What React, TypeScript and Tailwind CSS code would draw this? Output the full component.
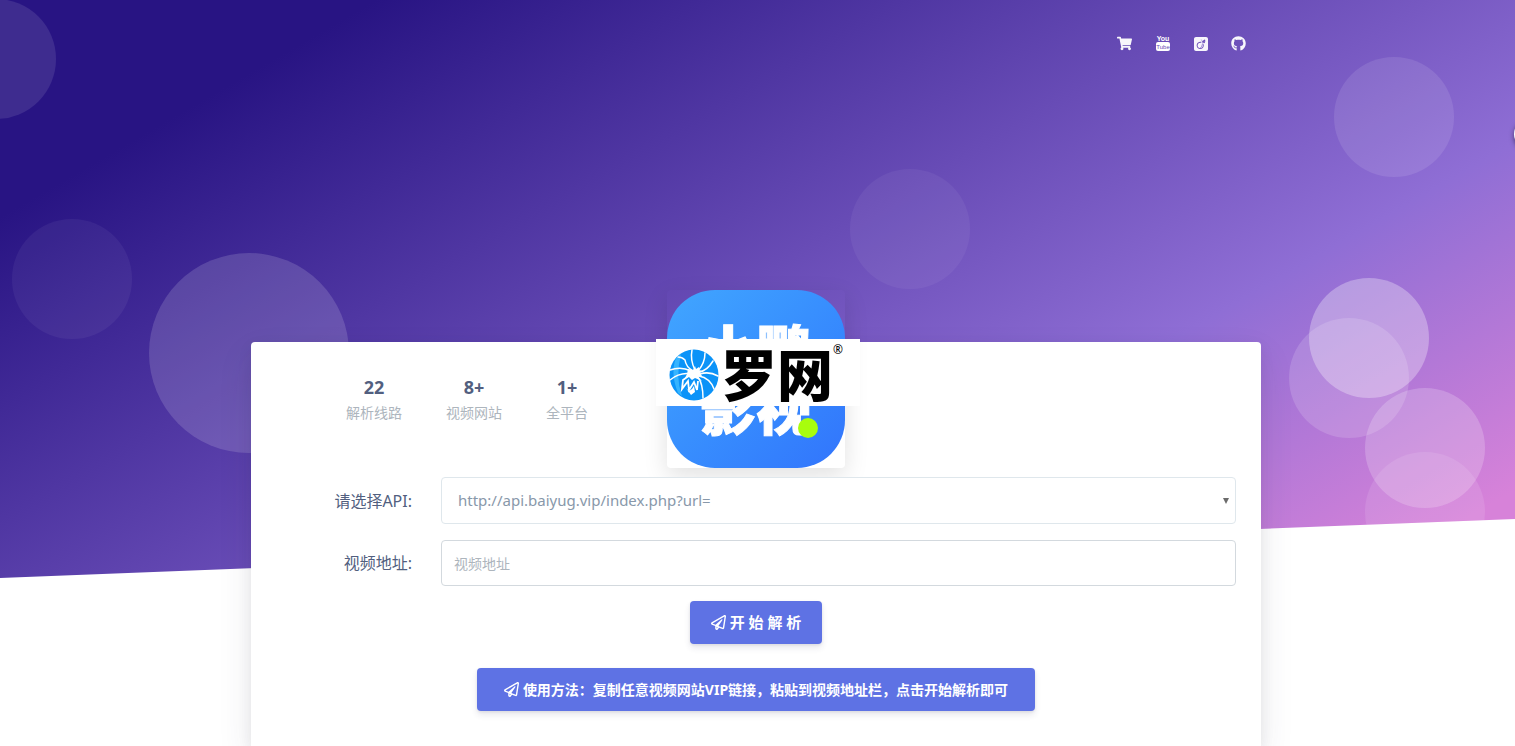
import React from "react";
import { FaGithub, FaRegPaperPlane, FaShoppingCart } from "react-icons/fa";
import { FaSquareViadeo } from "react-icons/fa6";

const stats = [
  { value: "22", label: "解析线路" },
  { value: "8+", label: "视频网站" },
  { value: "1+", label: "全平台" },
];

const bubbles = [
  "-left-16 top-0 size-[120px] bg-white/10",
  "right-[4%] top-[10%] size-[120px] bg-white/10",
  "right-[5.67%] top-[279px] size-[120px] bg-white/30",
  "right-[7%] top-[319px] size-[120px] bg-white/15",
  "left-3 top-[38%] size-[120px] bg-white/5",
  "left-[149px] top-[254px] size-[200px] bg-white/15",
  "right-[36%] bottom-[50%] size-[120px] bg-white/5",
  "right-[2%] bottom-[70px] size-[120px] bg-white/20",
  "right-[2%] bottom-[1%] size-[120px] bg-white/10",
];

function YoutubeIcon() {
  return (
    <svg viewBox="0 0 14 17" className="h-[17px] w-[14px] overflow-visible" aria-hidden="true">
      <text x="7" y="6" textAnchor="middle" fontSize="7" fontWeight="bold" fontFamily="Liberation Sans Narrow, Liberation Sans, sans-serif" fill="#fff">
        You
      </text>
      <rect x="0" y="7" width="14" height="9" rx="2" fill="#fff" />
      <text x="7" y="14" textAnchor="middle" fontSize="6" fontFamily="Liberation Sans Narrow, Liberation Sans, sans-serif" fill="#6a4bb5">
        Tube
      </text>
    </svg>
  );
}

function Cover() {
  return (
    <div className="absolute inset-x-0 -top-px h-[579px] overflow-hidden bg-[linear-gradient(150deg,#281483_15%,#8f6ed5_70%,#d782d9_94%)] [clip-path:polygon(0_0,100%_0,100%_calc(100%_-_3.9vw),0_100%)]">
      {bubbles.map((b) => (
        <span key={b} className={"absolute rounded-full " + b} />
      ))}
    </div>
  );
}

function Emblem() {
  return (
    <svg viewBox="0 0 50 52" className="h-[52px] w-[50px]" aria-hidden="true">
      <ellipse cx="25" cy="26" rx="24.5" ry="25.5" fill="#0b93f8" />
      <path d="M7 9 Q1 24 9 44 L13 47 Q6 28 12 5Z" fill="#35b4ff" />
      <g fill="none" stroke="#fff" strokeWidth="1.5" strokeLinecap="round">
        <path d="M24 22Q17 18 16 11Q13 8 9 8" />
        <path d="M26 21Q21 11 23 1" />
        <path d="M29 22Q36 14 36 4" />
        <path d="M30 23Q38 22 44 12" />
        <path d="M31 25Q40 22 49 27" />
        <path d="M30 27Q41 29 45 40" />
        <path d="M29 28Q34 35 34 49" />
        <path d="M22 22Q12 17 1 21" />
        <path d="M22 25Q11 23 1 31" />
      </g>
      <path d="M19 20l5 1 2-4 1 3 3-2v3l3 1-2 2 2 3-4 1 4 4-7-3-3 2-3-3-4 1 2-4z" fill="#fff" />
      <path d="M21 26l-7 5-1 9 6-8 1 9 5-8 3 8 1-9" fill="none" stroke="#fff" strokeWidth="1.8" />
      <path d="M17 39l3 3 3-2 2-3 1 6-4 3z" fill="#fff" />
    </svg>
  );
}

function Avatar() {
  return (
    <div className="absolute -top-[52px] left-1/2 size-[178px] -translate-x-1/2 rounded shadow-[0_8px_24px_rgba(0,0,0,0.12)]">
      <div className="flex size-full flex-col items-center justify-center rounded-[48px] bg-linear-to-br from-[#41a6ff] to-[#3274fc] text-[56px] leading-[58px] font-black text-white [-webkit-text-stroke:1px_white]">
        <span>小鹏</span>
        <span>影视</span>
      </div>
      <span className="absolute right-[27px] bottom-[30px] size-5 rounded-full bg-[#a8fd0d]" />
      <div className="absolute top-[49px] -left-[11px] flex h-[67px] w-[204px] items-center bg-white pt-1 pl-[13px]">
        <Emblem />
        <span className="pl-0.5 text-[56px] leading-[63px] font-black text-black">罗网</span>
        <span className="self-start text-xs leading-[14px] text-black">®</span>
      </div>
    </div>
  );
}

export default function App() {
  return (
    <div className="relative flex min-h-screen flex-col overflow-hidden bg-white font-['Noto_Sans','Noto_Sans_CJK_SC',sans-serif] text-[#525f7f]">
      <Cover />
      <header className="relative mx-auto flex h-[342px] w-full max-w-[1010px] items-start justify-end pt-[35px] pr-[16px]">
        <nav className="flex items-center gap-[22px] text-[15px] text-white/95">
          <a href="#shop" aria-label="Shop" className="flex h-[17px] w-4 items-center justify-center"><FaShoppingCart /></a>
          <a href="#youtube" aria-label="YouTube" className="flex h-[17px] w-4 items-center justify-center"><YoutubeIcon /></a>
          <a href="#viadeo" aria-label="Viadeo" className="flex h-[17px] w-4 items-center justify-center"><FaSquareViadeo className="size-4" /></a>
          <a href="#github" aria-label="GitHub" className="flex h-[17px] w-4 items-center justify-center"><FaGithub /></a>
        </nav>
      </header>

      <main className="relative flex w-full flex-1 justify-center pr-[3px]">
        <section className="relative w-full max-w-[1010px] rounded-t bg-white shadow-[0_15px_35px_rgba(50,50,93,0.1),0_5px_15px_rgba(0,0,0,0.07)]">
          <div className="flex gap-11 pt-8 pl-[95px] text-center">
            {stats.map((s) => (
              <div key={s.label}>
                <div className="text-lg leading-[26px] font-bold">{s.value}</div>
                <div className="text-sm leading-[26px] text-[#adb5bd]">{s.label}</div>
              </div>
            ))}
          </div>
          <Avatar />

          <form className="relative pt-[51px]" onSubmit={(e) => e.preventDefault()}>
            <div className="grid grid-cols-[161px_1fr] items-center gap-x-[29px] gap-y-4 pr-[25px]">
              <label htmlFor="api" className="text-right text-base">请选择API:</label>
              <div className="relative">
                <select id="api" className="h-[47px] w-full appearance-none rounded border border-[#dfe7ec] bg-white px-4 text-[15px] text-[#8898aa]">
                  <option>http://api.baiyug.vip/index.php?url=</option>
                </select>
                <svg viewBox="0 0 6 6" className="pointer-events-none absolute top-[21px] right-[7px] size-[6px]" aria-hidden="true">
                  <path d="M0 0h6L3 6z" fill="#6b6b6b" />
                </svg>
              </div>
              <label htmlFor="url" className="text-right text-base">视频地址:</label>
              <input id="url" type="text" placeholder="视频地址" className="h-[46px] w-full rounded border border-[#d3d9de] bg-white px-3 text-sm placeholder:text-[#adb5bd]" />
            </div>
            <div className="flex flex-col items-center gap-6 pt-[15px] text-white">
              <button type="submit" className="flex h-[43px] items-center gap-1 rounded bg-[#5e72e4] px-[21px] text-[15px] font-bold shadow-[0_4px_6px_rgba(50,50,93,0.11),0_1px_3px_rgba(0,0,0,0.08)]">
                <FaRegPaperPlane />
                开 始 解 析
              </button>
              <button type="button" className="flex h-[43px] items-center gap-1 rounded bg-[#5e72e4] px-[27px] text-sm font-bold shadow-[0_4px_6px_rgba(50,50,93,0.11),0_1px_3px_rgba(0,0,0,0.08)]">
                <FaRegPaperPlane className="size-[15px]" />
                使用方法：复制任意视频网站VIP链接，粘贴到视频地址栏，点击开始解析即可
              </button>
            </div>
          </form>
        </section>
      </main>
      <span className="absolute top-[119px] -right-[29px] size-[30px] rounded-full bg-white shadow-[0_2px_5px_rgba(0,0,0,0.5)]" />
    </div>
  );
}
